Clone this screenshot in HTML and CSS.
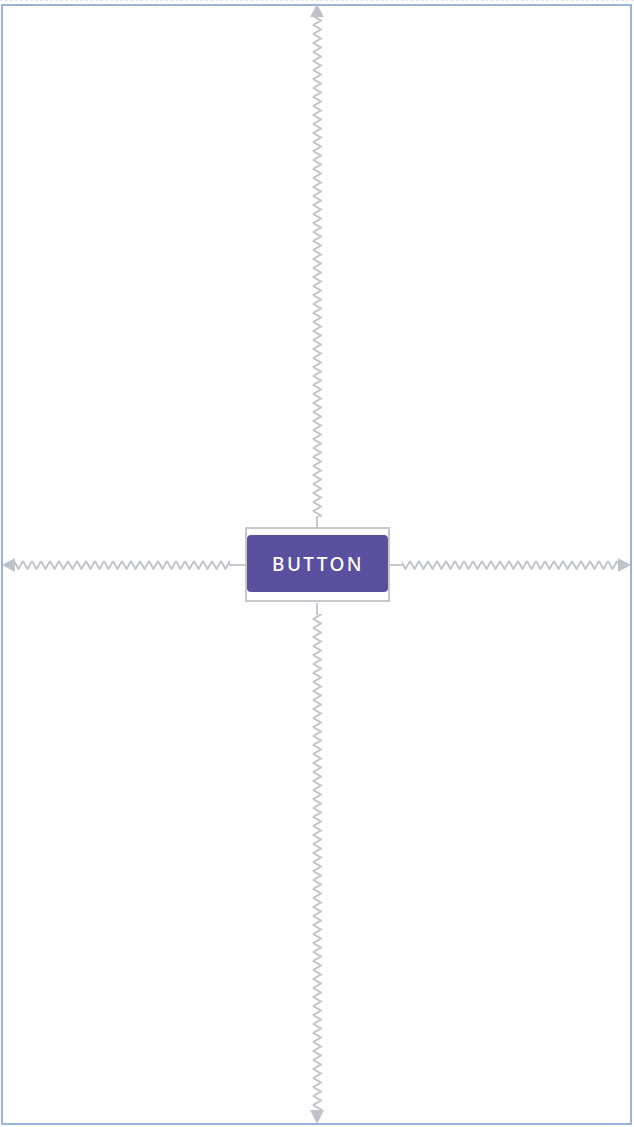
FILE: index.html
```html
<!DOCTYPE html>
<html>
<head>
<meta charset="utf-8">
<link rel="stylesheet" href="styles.css">
</head>
<body>
<div class="canvas">
  <div class="frame">
    <div class="bounds">
      <div class="btn">BUTTON</div>
    </div>
  </div>
  <svg class="constraints" width="634" height="1127" viewBox="0 0 634 1127">
    <defs>
      <pattern id="zv" x="312" y="15" width="10" height="9" patternUnits="userSpaceOnUse">
        <polyline points="1,0 9,4.5 1,9" fill="none" stroke="#bfc3c9" stroke-width="1.9"/>
      </pattern>
      <pattern id="zh" x="14" y="559" width="9" height="10" patternUnits="userSpaceOnUse">
        <polyline points="0,1 4.5,9 9,1" fill="none" stroke="#bfc3c9" stroke-width="1.9"/>
      </pattern>
    </defs>
    <g fill="#bfc3c9" stroke="#bfc3c9" stroke-width="1.8">
      <polygon points="317,3 310,16 324,16" stroke="none"/>
      <rect x="312" y="15" width="10" height="501" fill="url(#zv)" stroke="none"/>
      <line x1="317" y1="515" x2="317" y2="527"/>

      <line x1="317" y1="602" x2="317" y2="614"/>
      <rect x="312" y="613" width="10" height="496" fill="url(#zv)" stroke="none"/>
      <polygon points="310,1109 324,1109 317,1123" stroke="none"/>

      <polygon points="2,564 15,557 15,571" stroke="none"/>
      <rect x="14" y="559" width="216" height="10" fill="url(#zh)" stroke="none"/>
      <line x1="229" y1="564" x2="245" y2="564"/>

      <line x1="390" y1="564" x2="403" y2="564"/>
      <rect x="402" y="559" width="216" height="10" fill="url(#zh)" stroke="none"/>
      <polygon points="618,557 618,571 631,564" stroke="none"/>
    </g>
  </svg>
</div>
</body>
</html>
```
FILE: styles.css
```css
html, body {
  margin: 0;
  padding: 0;
  background: #ffffff;
}

.canvas {
  position: relative;
  width: 634px;
  height: 1127px;
  overflow: hidden;
  padding: 3px 2px 2px 1px;
  box-sizing: border-box;
  border-top: 1px dashed #e2e4e8;
}

.frame {
  box-sizing: border-box;
  width: 631px;
  height: 1121px;
  border: 2px solid #97b5db;
  display: flex;
  align-items: center;
  justify-content: center;
  padding-left: 1px;
}

.bounds {
  box-sizing: border-box;
  width: 145px;
  height: 75px;
  border: 2px solid #c6c8cd;
  padding: 6px 0 8px 0;
  display: flex;
}

.btn {
  flex: 1;
  background: #5b4f9f;
  border-radius: 4px;
  color: #ffffff;
  font-family: "Noto Sans", Roboto, sans-serif;
  font-weight: 500;
  font-size: 19px;
  letter-spacing: 2.4px;
  display: flex;
  align-items: center;
  justify-content: center;
  padding-left: 2px;
}

.constraints {
  position: absolute;
  left: 0;
  top: 0;
  pointer-events: none;
}
```
